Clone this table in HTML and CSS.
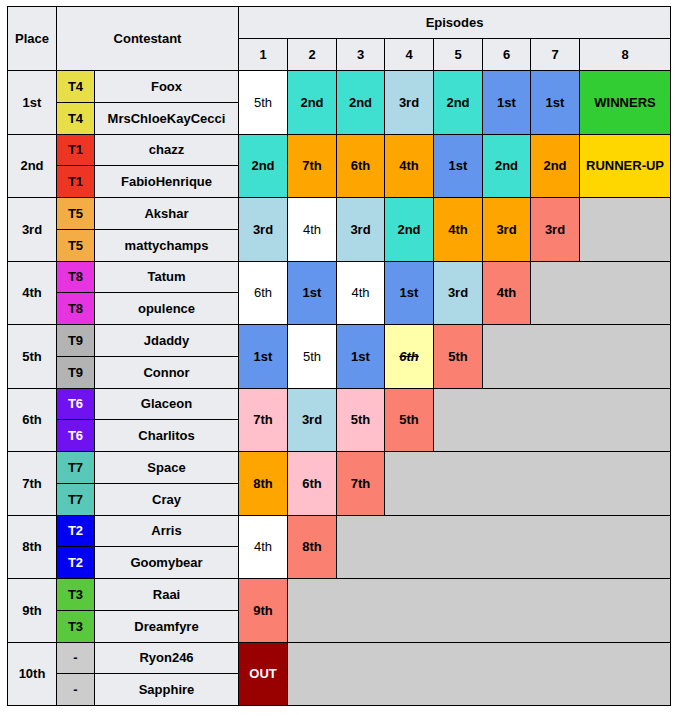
FILE: index.html
```html
<!DOCTYPE html>
<html>
<head>
<meta charset="utf-8">
<link rel="stylesheet" href="styles.css">
</head>
<body>
<table class="results">
  <colgroup>
    <col class="c-place"><col class="c-team"><col class="c-name">
    <col class="c-ep"><col class="c-ep"><col class="c-ep-n"><col class="c-ep"><col class="c-ep"><col class="c-ep-n"><col class="c-ep"><col class="c-final">
  </colgroup>
  <thead>
    <tr class="h1">
      <th rowspan="2">Place</th>
      <th rowspan="2" colspan="2">Contestant</th>
      <th colspan="8">Episodes</th>
    </tr>
    <tr class="h2">
      <th>1</th><th>2</th><th>3</th><th>4</th><th>5</th><th>6</th><th>7</th><th>8</th>
    </tr>
  </thead>
  <tbody>
    <tr class="top">
      <th rowspan="2">1st</th>
      <td class="t4">T4</td><td class="name">Foox</td>
      <td rowspan="2" class="white">5th</td>
      <td rowspan="2" class="tq">2nd</td>
      <td rowspan="2" class="tq">2nd</td>
      <td rowspan="2" class="lb">3rd</td>
      <td rowspan="2" class="tq">2nd</td>
      <td rowspan="2" class="cb">1st</td>
      <td rowspan="2" class="cb">1st</td>
      <td rowspan="2" class="win">WINNERS</td>
    </tr>
    <tr class="bot"><td class="t4">T4</td><td class="name">MrsChloeKayCecci</td></tr>

    <tr class="top">
      <th rowspan="2">2nd</th>
      <td class="t1">T1</td><td class="name">chazz</td>
      <td rowspan="2" class="tq">2nd</td>
      <td rowspan="2" class="or">7th</td>
      <td rowspan="2" class="or">6th</td>
      <td rowspan="2" class="or">4th</td>
      <td rowspan="2" class="cb">1st</td>
      <td rowspan="2" class="tq">2nd</td>
      <td rowspan="2" class="or">2nd</td>
      <td rowspan="2" class="run">RUNNER-UP</td>
    </tr>
    <tr class="bot"><td class="t1">T1</td><td class="name">FabioHenrique</td></tr>

    <tr class="top">
      <th rowspan="2">3rd</th>
      <td class="t5">T5</td><td class="name">Akshar</td>
      <td rowspan="2" class="lb">3rd</td>
      <td rowspan="2" class="white">4th</td>
      <td rowspan="2" class="lb">3rd</td>
      <td rowspan="2" class="tq">2nd</td>
      <td rowspan="2" class="or">4th</td>
      <td rowspan="2" class="or">3rd</td>
      <td rowspan="2" class="sa">3rd</td>
      <td rowspan="2" class="gone"></td>
    </tr>
    <tr class="bot"><td class="t5">T5</td><td class="name">mattychamps</td></tr>

    <tr class="top">
      <th rowspan="2">4th</th>
      <td class="t8">T8</td><td class="name">Tatum</td>
      <td rowspan="2" class="white">6th</td>
      <td rowspan="2" class="cb">1st</td>
      <td rowspan="2" class="white">4th</td>
      <td rowspan="2" class="cb">1st</td>
      <td rowspan="2" class="lb">3rd</td>
      <td rowspan="2" class="sa">4th</td>
      <td rowspan="2" colspan="2" class="gone"></td>
    </tr>
    <tr class="bot"><td class="t8">T8</td><td class="name">opulence</td></tr>

    <tr class="top">
      <th rowspan="2">5th</th>
      <td class="t9">T9</td><td class="name">Jdaddy</td>
      <td rowspan="2" class="cb">1st</td>
      <td rowspan="2" class="white">5th</td>
      <td rowspan="2" class="cb">1st</td>
      <td rowspan="2" class="ye"><s>6th</s></td>
      <td rowspan="2" class="sa">5th</td>
      <td rowspan="2" colspan="3" class="gone"></td>
    </tr>
    <tr class="bot"><td class="t9">T9</td><td class="name">Connor</td></tr>

    <tr class="top">
      <th rowspan="2">6th</th>
      <td class="t6">T6</td><td class="name">Glaceon</td>
      <td rowspan="2" class="pk">7th</td>
      <td rowspan="2" class="lb">3rd</td>
      <td rowspan="2" class="pk">5th</td>
      <td rowspan="2" class="sa">5th</td>
      <td rowspan="2" colspan="4" class="gone"></td>
    </tr>
    <tr class="bot"><td class="t6">T6</td><td class="name">Charlitos</td></tr>

    <tr class="top">
      <th rowspan="2">7th</th>
      <td class="t7">T7</td><td class="name">Space</td>
      <td rowspan="2" class="or">8th</td>
      <td rowspan="2" class="pk">6th</td>
      <td rowspan="2" class="sa">7th</td>
      <td rowspan="2" colspan="5" class="gone"></td>
    </tr>
    <tr class="bot"><td class="t7">T7</td><td class="name">Cray</td></tr>

    <tr class="top">
      <th rowspan="2">8th</th>
      <td class="t2">T2</td><td class="name">Arris</td>
      <td rowspan="2" class="white">4th</td>
      <td rowspan="2" class="sa">8th</td>
      <td rowspan="2" colspan="6" class="gone"></td>
    </tr>
    <tr class="bot"><td class="t2">T2</td><td class="name">Goomybear</td></tr>

    <tr class="top">
      <th rowspan="2">9th</th>
      <td class="t3">T3</td><td class="name">Raai</td>
      <td rowspan="2" class="sa">9th</td>
      <td rowspan="2" colspan="7" class="gone"></td>
    </tr>
    <tr class="bot"><td class="t3">T3</td><td class="name">Dreamfyre</td></tr>

    <tr class="top">
      <th rowspan="2">10th</th>
      <td class="tn">-</td><td class="name">Ryon246</td>
      <td rowspan="2" class="out">OUT</td>
      <td rowspan="2" colspan="7" class="gone"></td>
    </tr>
    <tr class="bot"><td class="tn">-</td><td class="name">Sapphire</td></tr>
  </tbody>
</table>
</body>
</html>
```

FILE: styles.css
```css
html, body {
  margin: 0;
  padding: 0;
  background: #ffffff;
}
body {
  padding: 6px 0 0 7px;
  font-family: "Liberation Sans", Arial, sans-serif;
  font-size: 13px;
  color: #000000;
}
.results {
  border-collapse: collapse;
  table-layout: fixed;
  width: 664px;
}
.c-place { width: 49px; }
.c-team { width: 38px; }
.c-name { width: 144px; }
.c-ep { width: 49px; }
.c-ep-n { width: 48px; }
.c-final { width: 91px; }

.results th,
.results td {
  border: 1px solid #000000;
  padding: 0;
  text-align: center;
  vertical-align: middle;
  font-weight: bold;
  overflow: hidden;
  white-space: nowrap;
  line-height: 15px;
}
.results th {
  background: #eaecf0;
}
.h1 th, .h2 th { height: 31px; }
.top > td, .top > th { height: 30.75px; }
.bot > td { height: 30.75px; }

.name { background: #eaecf0; }

.t4 { background: #e6df48; }
.t1 { background: #ee3524; }
.t5 { background: #f4ad44; }
.t8 { background: #e534e0; }
.t9 { background: #b3b3b3; }
.t6 { background: #7012f0; color: #ffffff; }
.t7 { background: #5ac8b8; }
.t2 { background: #0000f2; color: #ffffff; }
.t3 { background: #5ac83c; }
.tn { background: #cccccc; }

.white { background: #ffffff; font-weight: normal !important; }
.tq { background: #40e0d0; }
.lb { background: #add8e6; }
.cb { background: #6495ed; }
.or { background: #ffa500; }
.sa { background: #fa8072; }
.pk { background: #ffc0cb; }
.ye { background: #ffffaa; font-style: italic; }
.win { background: #32cd32; }
.run { background: #ffd700; }
.out { background: #990000; color: #ffffff; }
.gone { background: #cccccc; }
```
